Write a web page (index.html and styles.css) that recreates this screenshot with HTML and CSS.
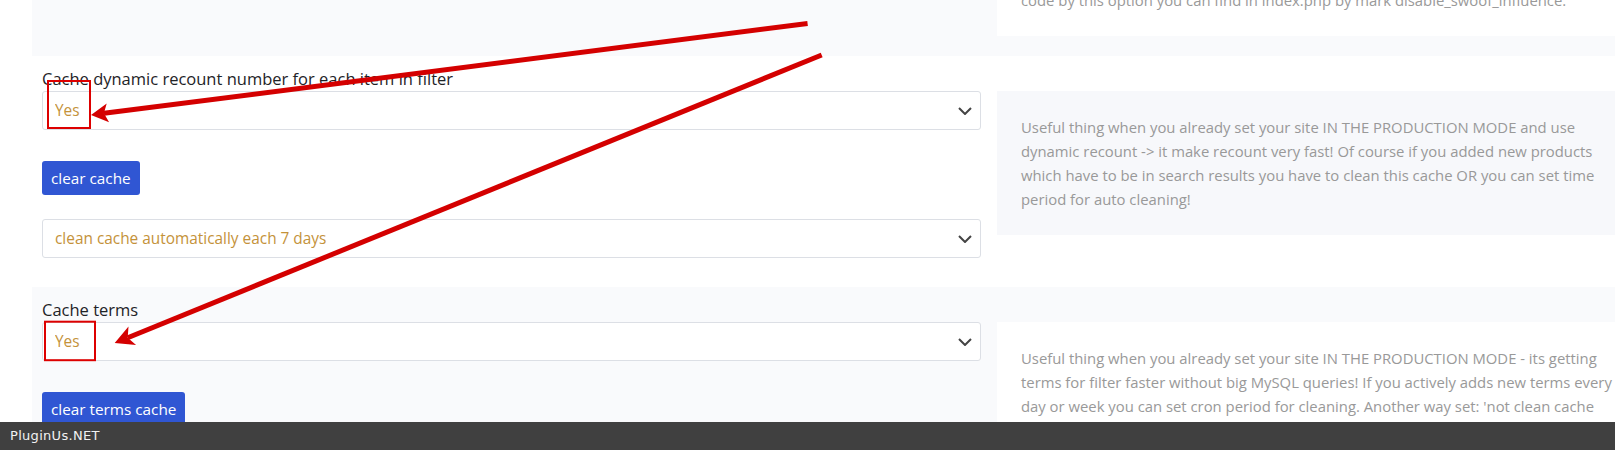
FILE: index.html
```html
<!DOCTYPE html>
<html lang="en">
<head>
    <meta charset="UTF-8">
    <title>Cache options</title>
    <link rel="stylesheet" href="styles.css">
</head>
<body>
    <div class="options">
        <div class="option-row shaded">
            <div class="option-main"></div>
            <div class="option-info">
                <div class="info-box">
                    <div class="info-text">Disable the plugin influence on the pages where you do not need it. Example of the<br>code by this option you can find in index.php by mark disable_swoof_influence.</div>
                </div>
            </div>
        </div>

        <div class="option-row">
            <div class="option-main">
                <div class="option-label">Cache dynamic recount number for each item in filter</div>
                <div class="select-wrap">
                    <select class="option-select">
                        <option>Yes</option>
                        <option>No</option>
                    </select>
                    <svg class="chevron" width="14" height="8" viewBox="0 0 14 8"><path d="M1 1 L7 7 L13 1" fill="none" stroke="#444" stroke-width="2"/></svg>
                </div>
                <button class="btn">clear cache</button>
                <div class="select-wrap spaced">
                    <select class="option-select">
                        <option>clean cache automatically each 7 days</option>
                    </select>
                    <svg class="chevron" width="14" height="8" viewBox="0 0 14 8"><path d="M1 1 L7 7 L13 1" fill="none" stroke="#444" stroke-width="2"/></svg>
                </div>
            </div>
            <div class="option-info">
                <div class="info-box">
                    <div class="info-text">Useful thing when you already set your site IN THE PRODUCTION MODE and use dynamic recount -&gt; it make recount very fast! Of course if you added new products which have to be in search results you have to clean this cache OR you can set time period for auto cleaning!</div>
                </div>
            </div>
        </div>

        <div class="option-row shaded">
            <div class="option-main">
                <div class="option-label">Cache terms</div>
                <div class="select-wrap">
                    <select class="option-select">
                        <option>Yes</option>
                        <option>No</option>
                    </select>
                    <svg class="chevron" width="14" height="8" viewBox="0 0 14 8"><path d="M1 1 L7 7 L13 1" fill="none" stroke="#444" stroke-width="2"/></svg>
                </div>
                <button class="btn">clear terms cache</button>
            </div>
            <div class="option-info">
                <div class="info-box">
                    <div class="info-text">Useful thing when you already set your site IN THE PRODUCTION MODE - its getting terms for filter faster without big MySQL queries! If you actively adds new terms every day or week you can set cron period for cleaning. Another way set: 'not clean cache automatically' and clean it manually.</div>
                </div>
            </div>
        </div>
    </div>

    <!-- screenshot annotations -->
    <svg class="annotations" width="1615" height="450" viewBox="0 0 1615 450">
        <g fill="none" stroke="#d00" stroke-width="2">
            <rect x="48" y="81" width="42" height="47"/>
            <rect x="45" y="321.7" width="50" height="38.5"/>
        </g>
        <g stroke="#d40000" stroke-width="5">
            <line x1="807.6" y1="23.5" x2="104" y2="113.3"/>
            <line x1="821.7" y1="55" x2="127.7" y2="337.7"/>
        </g>
        <g fill="#d40000">
            <polygon points="91,115 106.7,103.4 103.9,113.3 109.1,122.3"/>
            <polygon points="114.7,343 128.5,326.5 127.7,337.7 136.1,345.1"/>
        </g>
    </svg>

    <div class="footer">PluginUs.NET</div>
</body>
</html>
```

FILE: styles.css
```css
:root {
    --shade: #f9fafc;
    --info-bg: #f7f8fb;
    --border: #dcdfe5;
    --label: #1e2327;
    --value: #c4923a;
    --info-text: #999;
    --blue: #3056d3;
}

* { box-sizing: border-box; }

body {
    margin: 0;
    font-family: "Open Sans", Lato, sans-serif;
    background: #fff;
    overflow: hidden;
}

.options {
    margin: -95px 0 0 32px;
}

.option-row {
    display: grid;
    grid-template-columns: 965px 650px;
    align-items: start;
}

.option-row.shaded {
    background: var(--shade);
}

.option-main {
    padding: 11px 16px 29px 10px;
}

.option-label {
    font-size: 16.5px;
    line-height: 24px;
    color: var(--label);
}

.select-wrap {
    position: relative;
}

.select-wrap.spaced {
    margin-top: 24px;
}

.option-select {
    display: block;
    width: 100%;
    height: 39px;
    padding: 0 12px;
    border: 1px solid var(--border);
    border-radius: 3px;
    background: #fff;
    color: var(--value);
    font-family: inherit;
    font-size: 15.4px;
    appearance: none;
    -webkit-appearance: none;
}

.chevron {
    position: absolute;
    right: 9px;
    top: 16px;
}

.btn {
    display: block;
    margin-top: 31px;
    height: 34px;
    padding: 0 9px;
    border: none;
    border-radius: 3px;
    background: var(--blue);
    color: #fff;
    font-family: inherit;
    font-size: 15.3px;
    cursor: pointer;
}

.option-info {
    padding: 35px 0 20px 0;
}

.info-box {
    background: var(--info-bg);
    padding: 24px;
}

.option-row.shaded .info-box {
    background: #fff;
}

.info-text {
    width: 603px;
    font-size: 14.85px;
    line-height: 24px;
    color: var(--info-text);
}

.annotations {
    position: absolute;
    left: 0;
    top: 0;
    pointer-events: none;
}

.footer {
    position: fixed;
    left: 0;
    right: 0;
    bottom: 0;
    height: 28px;
    padding-left: 10px;
    background: #404040;
    color: #f2f2f2;
    font-family: "DejaVu Sans", sans-serif;
    font-size: 13px;
    letter-spacing: 0.3px;
    line-height: 28px;
}
```
